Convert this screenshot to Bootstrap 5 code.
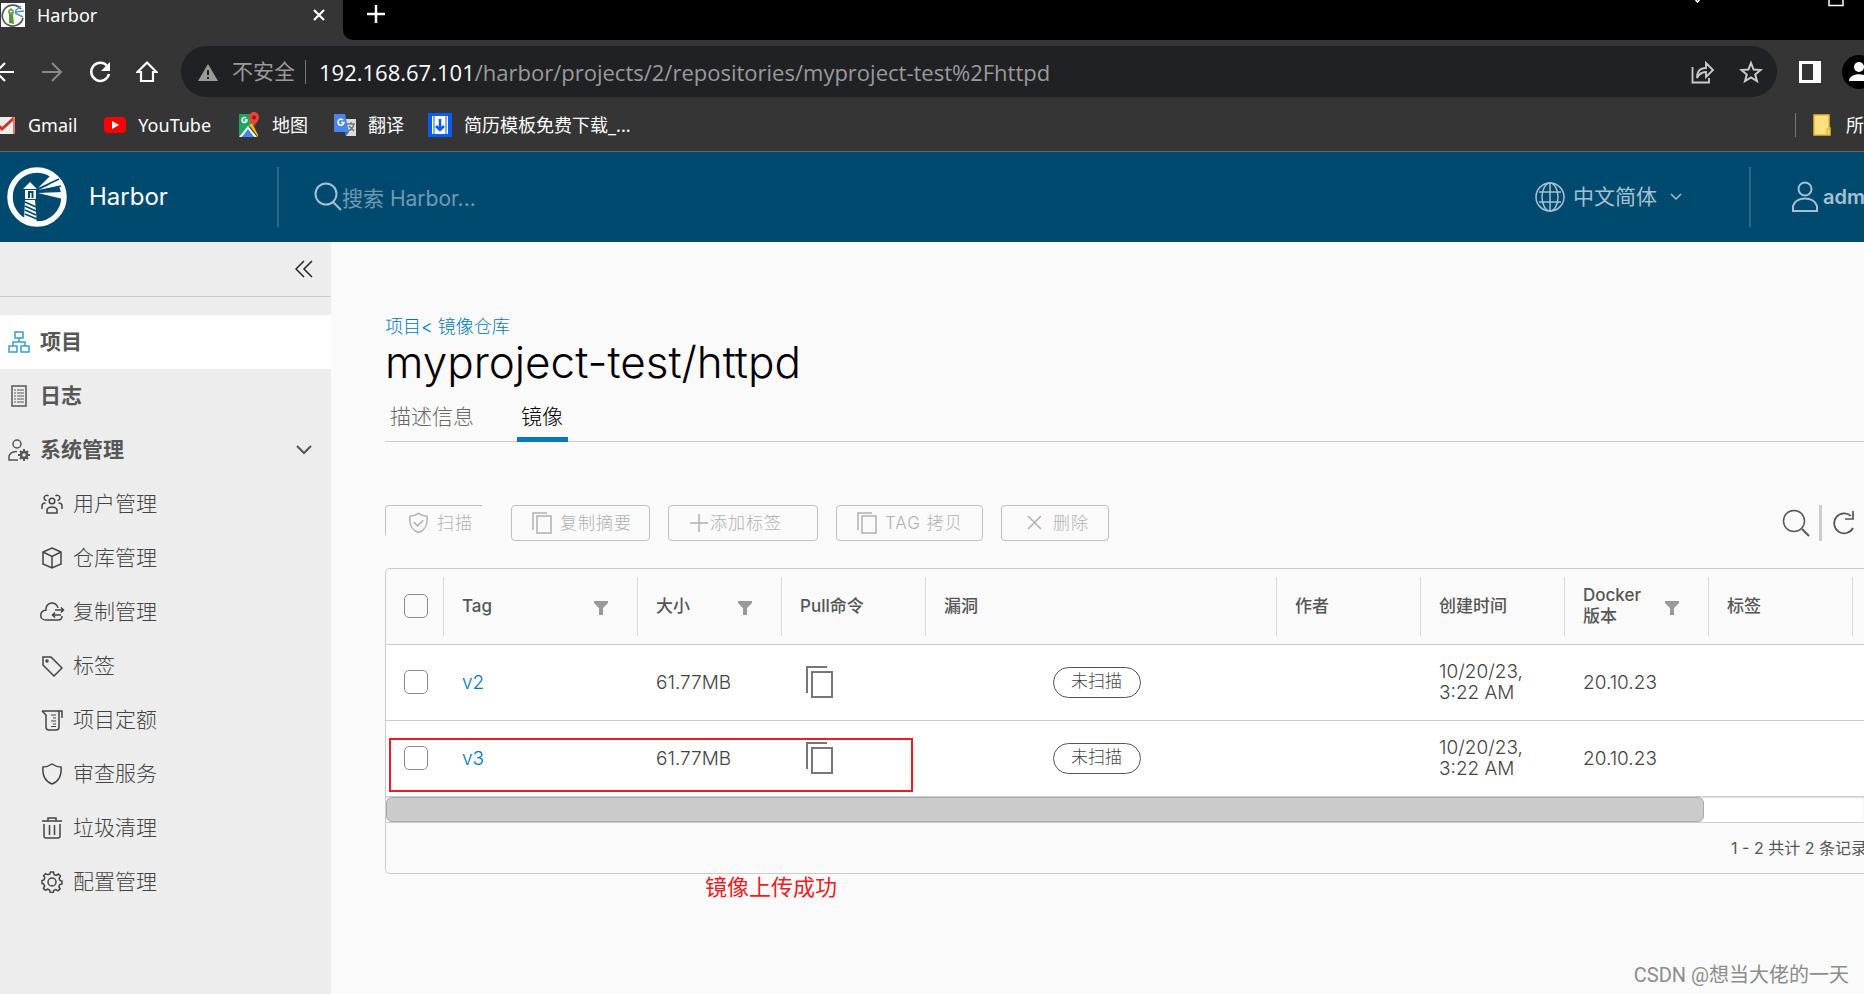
<!DOCTYPE html>
<html lang="zh-CN">
<head>
<meta charset="utf-8">
<meta name="viewport" content="width=device-width, initial-scale=1">
<title>Harbor</title>
<link href="https://cdn.jsdelivr.net/npm/bootstrap@5.3.0/dist/css/bootstrap.min.css" rel="stylesheet">
<style>
:root{--ui:"Noto Sans","Noto Sans CJK SC",sans-serif;--app:"Inter","Noto Sans CJK SC",sans-serif;--line:#ccc;--ink:#565656;--blue:#0079b8}
body{font-family:var(--app);font-size:18px;color:var(--ink);background:#fafafa;overflow-x:hidden}
svg{display:block;flex:none;fill:none;stroke:currentColor;stroke-width:1.5}
button{padding:0;border:0;background:none;color:inherit}
a{color:inherit;text-decoration:none}
/* browser chrome */
.chrome{font-family:var(--ui);background:#353535;color:#fff;border-bottom:1px solid #666}
.tabstrip{height:40px;background:#000}
.page-tab{width:343px;height:40px;background:#353535;padding:0 17px 10px 1px;font-size:18px;line-height:30px}
.tab-plus{border-bottom-left-radius:10px;background:#000;height:40px;padding:4px 0 0 23px}
.tab-fill{background:#353535}
.toolbar{height:57px;padding-top:6px}
.omnibox{height:51px;border-radius:26px;background:#202124;padding:0 14px 0 17px;font-size:21px;color:#9a9a9a}
.url{line-height:30px;font-family:"Open Sans",sans-serif;font-size:22px}
.url b{color:#fff;font-weight:400}
.navset{width:181px}
.bookmarks{height:54px;font-size:18px;line-height:24px;padding-top:2px}
.vline{width:1px;height:24px;background:#777}
.avatar{width:22px;overflow:hidden}
/* app header */
.app-head{height:90px;background:#004a70;color:#a5c1d1}
.app-head .brand{width:277px;font-size:24px;color:#fff;padding-left:7px;gap:22px}
.rule{width:2px;height:60px;background:#2f6a8a}
.search-field{background:none;border:0;outline:0;color:#7fa4b8;font-size:21px;line-height:30px;padding:4px 0 0;min-width:0}
.search-field::placeholder{color:#6f9ab0;opacity:1}
.lang{font-size:21px}
.user{width:73px;font-size:20px;font-weight:600;white-space:nowrap}
/* sidebar */
.side{width:331px;flex:none;background:#ededed;font-size:21px;line-height:30px}
.side-top{height:55px;border-bottom:1px solid var(--line);padding-right:18px;color:#222;margin-bottom:18px}
.side-link{height:54px;display:flex;align-items:center;padding:0 18px 0 8px;gap:10px;font-weight:700}
.side-link.sub{padding-left:41px;font-weight:300;color:#444}
.side-link.on{background:#fff}
.side-link.on svg{color:#3a9fd0}
/* content */
.content{padding:71px 0 0 54px;min-width:0}
.crumbs{line-height:28px;color:var(--blue);font-weight:300}
.title{font-size:44px;line-height:42px;font-weight:300;color:#000;margin:0 0 2px}
.tabs{height:57px;box-shadow:inset 0 -1px 0 var(--line);font-size:21px;line-height:30px;gap:38px}
.tabs button{padding:17px 5px 5px;color:#666;border-bottom:5px solid transparent;font-weight:300}
.tabs button.on{color:#000;border-color:var(--blue);padding-left:4px;padding-right:5px}
.actions{height:36px;margin-top:63px;padding-right:9px;gap:18px;color:#b0b0b0;font-size:17px;line-height:24px}
.act{height:36px;border:1px solid #c0c0c0;border-radius:4px;display:flex;align-items:center;letter-spacing:1px;white-space:nowrap;font-weight:300;padding-bottom:1px}
.act-scan{width:97px;height:30px;margin:0 11px 6px 0;border-width:1px 0 0 1px;border-radius:4px 0 0 0;padding:5px 0 0}
.act-icons{color:var(--ink)}
.grid-card{margin-top:27px;border:1px solid var(--line);border-right:0;border-radius:5px 0 0 5px;position:relative}
.tags{table-layout:fixed;width:100%;border-collapse:collapse;line-height:21px}
.tags th,.tags td{padding:0;vertical-align:middle}
.tags tr{height:76px;border-bottom:1px solid var(--line)}
.tags thead tr{height:75px}
.tags tbody{background:#fff}
.tags th{font-size:17px;font-weight:500}
.tags td{font-size:19px;font-weight:300;color:#444}
.th-in{height:59px;border-left:1px solid #d8d8d8;padding:0 29px 0 18px;display:flex;align-items:center;justify-content:space-between}
.tags td>div{padding-left:19px}
.tags a{color:var(--blue)}
.tick{appearance:none;width:24px;height:24px;border:1px solid #8c8c8c;border-radius:5px;background:#fff;margin:0 0 0 18px;display:block}
thead .tick{background:none}
.copy-btn{display:block;margin-left:25px;color:#777}
.copy-btn svg{stroke-width:2}
.tags .scan-cell{padding-right:8px}
.pill{display:block;width:88px;height:31px;border:1px solid var(--ink);border-radius:16px;font-size:17px;line-height:27px;text-align:center;margin:auto}
.hscroll{height:26px;background:#fff;border-bottom:1px solid var(--line);box-shadow:inset 0 1px 2px #ddd}
.hthumb{height:25px;background:#cbcbcb;border:1px solid #aaa;border-radius:6px;width:89.2%}
.foot{height:50px;margin-right:-3px;text-align:right;font-size:16px;line-height:50px;white-space:nowrap}
.redbox{position:absolute;left:3px;top:169px;width:524px;height:54px;border:2px solid #ed1c24}
.rednote{color:#ed1c24;font-size:22px;line-height:26px;padding-left:320px}
.sign{position:absolute;right:15px;bottom:4px;font-family:Roboto,"Noto Sans CJK SC",sans-serif;font-size:20px;line-height:30px;color:#8c8c8c}
</style>
</head>
<body class="min-vh-100 d-flex flex-column position-relative">
<header class="chrome">
  <div class="tabstrip d-flex">
    <div class="page-tab d-flex align-items-center">
      <svg width="24" height="24" viewBox="0 0 24 24"><path fill="#fff" stroke="none" d="M0 0h24v24H0z"/><path d="M20 6A10.500 10.500 0 1 0 22 15" stroke="#555" stroke-width="1.700"/><path fill="#4f9a35" stroke="none" d="M8 11h4l1 10-5-1z"/><path stroke="#4f9a35" d="M8 10h4V8l-2-2-2 2z"/><path d="m14 8 6-5M14 9l9-1M14 10l8 4" stroke="#5b8fbf"/></svg>
      <span class="ms-2 ps-1 me-auto">Harbor</span>
      <button aria-label="关闭"><svg width="14" height="14" viewBox="0 0 14 14" style="stroke-width:2.200"><path d="m2 2 10 10M12 2 2 12"/></svg></button>
    </div>
    <div class="tab-fill flex-grow-1"><div class="tab-plus d-flex align-items-start">
      <button aria-label="新标签页"><svg width="20" height="20" viewBox="0 0 20 20" style="stroke-width:2.5"><path d="M10 1v18M1 10h18"/></svg></button>
      <svg class="ms-auto" width="9" height="7" viewBox="0 5 9 7" style="margin-top:-4px"><path d="m1 3 3.500 4L8 3"/></svg>
      <svg style="margin:-4px 20px 0 126px" width="16" height="7" viewBox="0 0 16 7"><path d="M1-5v10.500h14V-5"/></svg>
    </div></div>
  </div>
  <div class="toolbar d-flex align-items-center">
    <div class="navset d-flex align-items-center">
      <svg width="14" height="24" viewBox="0 0 14 24" style="stroke-width:2.200"><path d="M-4 12h18M5 3l-9 9 9 9"/></svg>
      <svg style="margin-left:25px" width="26" height="24" viewBox="0 0 26 24"><path stroke="#8a8a8a" stroke-width="2" d="M3 12h19M13 3l9 9-9 9"/></svg>
      <svg style="margin-left:23px" width="24" height="24" viewBox="0 0 24 24" style="stroke-width:2.500"><path stroke-width="2.500" d="M19.500 6.500A9 9 0 1 0 21 14"/><path fill="currentColor" stroke="none" d="M22 2v9h-9z"/></svg>
      <svg class="ms-4" width="22" height="24" viewBox="0 0 22 24" style="stroke-width:2.200"><path d="M1.500 12 11 2.500l9.500 9.500H17v9H5v-9z"/></svg>
    </div>
    <div class="omnibox d-flex align-items-center flex-grow-1">
      <svg width="20" height="20" viewBox="0 0 20 20"><path fill="currentColor" stroke="none" d="m10 2 10 17H0z"/><path stroke="#202124" stroke-width="2" d="M10 8v5M10 15v2"/></svg>
      <span style="margin:0 10px 0 14px">不安全</span><span class="vline"></span>
      <span class="url me-auto" style="margin-left:13px"><b>192.168.67.101</b>/harbor/projects/2/repositories/myproject-test%2Fhttpd</span>
      <button aria-label="分享"><svg width="24" height="24" viewBox="0 0 24 24" style="stroke-width:1.800;color:#ccc"><path d="M1.500 7v15.500H18V18M6 18c0-7 3-10 9-10V3l7 7-7 7v-5c-4 0-7 2-9 6z"/></svg></button>
      <button aria-label="收藏" class="ms-4"><svg width="24" height="24" viewBox="0 0 24 24" style="stroke-width:2;color:#ccc"><path d="m12 3 2.600 6.500 7 .500-5.400 4.500L18 21l-6-3.700L6 21l1.800-6.500L2.400 10l7-.5z"/></svg></button>
    </div>
    <svg style="margin-left:22px" width="22" height="22" viewBox="0 0 22 22"><path fill="#fff" stroke="none" fill-rule="evenodd" d="M0 0h22v22H0zM3 3v16h11V3z"/></svg>
    <div class="avatar" style="margin-left:21px"><svg width="34" height="34" viewBox="0 0 34 34" style="stroke:none"><circle cx="17" cy="17" r="17" fill="#000"/><circle cx="17" cy="12" r="5" fill="#fff"/><path fill="#fff" d="M7 26c0-9 20-9 20 0z"/></svg></div>
  </div>
  <nav class="bookmarks d-flex align-items-center">
    <svg width="15" height="20" viewBox="9 0 15 20"><path fill="#eee" stroke="none" d="M0 2h24v17H0z"/><path stroke="#ddd" d="m9 16 3-4"/><path stroke="#d93025" stroke-width="3" d="M23 3 11 14 0 3"/><path stroke="#e57368" stroke-width="2" d="M23 2v17"/></svg>
    <a href="#" style="margin-left:13px">Gmail</a>
    <svg style="margin-left:27px" width="22" height="22" viewBox="0 0 22 22"><rect y="3" width="22" height="16" rx="4" fill="#f00" stroke="none"/><path fill="#fff" stroke="none" d="m8 7 7 4-7 4z"/></svg>
    <a href="#" style="margin-left:12px">YouTube</a>
    <svg style="margin-left:27px" width="22" height="26" viewBox="0 -2 22 26"><g stroke="none"><path fill="#1fa463" d="M1 0h14v10L1 23z"/><path fill="#fff" d="m1 23 9-11 9 11h-3l-6-7-6 7z"/><path fill="#4285f4" d="m4 23 6-8 6 8z"/><path fill="#fbbc04" d="m11 11 3-2 6 12v2z"/><path fill="#ea4335" d="M16-2a5 5 0 0 1 5 5c0 5-4 6-5 10-1-4-5-5-5-10a5 5 0 0 1 5-5z"/><circle cx="16" cy="3.500" r="2" fill="#8c1d18"/></g><path stroke="#fff" d="M8 4a2.500 2.500 0 1 0 1 2H6.500"/></svg>
    <a href="#" style="margin-left:12px">地图</a>
    <svg style="margin-left:25px" width="24" height="24" viewBox="0 0 24 24"><path fill="#ddd" stroke="none" d="M10 6h13v17H13z"/><path stroke="#777" d="M14 11h8M18 9v2M21 11c-1 4-3 6-6 7M16 13l5 5"/><path fill="#4a86e8" stroke="none" d="M1 1h11l4 18H1z"/><path fill="#3367d6" stroke="none" d="M12 19h4l-3 4z"/><path stroke="#fff" d="M10 7a3 3 0 1 0 1 2.500H8"/></svg>
    <a href="#" style="margin-left:11px">翻译</a>
    <svg style="margin-left:24px" width="24" height="24" viewBox="0 0 24 24"><path fill="#0a5cf0" stroke="none" d="M0 0h24v24H0z"/><path fill="#fff" stroke="none" d="M4 3h16v18H4z"/><path stroke="#0a5cf0" stroke-width="2.500" d="M12 6v11M8 13l4 4 4-4"/><path stroke="#0a5cf0" stroke-width="1" d="M6 3v18M18 3v18"/></svg>
    <a href="#" class="me-auto" style="margin-left:12px">简历模板免费下载_...</a>
    <span class="vline"></span>
    <svg style="margin-left:17px" width="18" height="22" viewBox="0 0 18 22"><path fill="#ffe082" stroke="#e5b93a" d="M1 1h15v13h1v7H1zM14 21v-6h2"/></svg>
    <a href="#" style="margin-left:15px">所</a>
  </nav>
</header>

<div class="app-head d-flex align-items-center">
  <div class="brand d-flex align-items-center">
    <svg width="60" height="60" viewBox="0 0 60 60"><circle cx="30" cy="30" r="27" style="stroke-width:5.500"/><g fill="currentColor" stroke="none"><path d="m23 15 7 7H16zM18 23h11v9H18zM18 33h10l2 25-13-3z"/><path d="m31 21 13-13 7 7z M31 23l20-9 2 5zM31 26l25-1v7z"/></g><g stroke="#004a70"><path d="M22 31v-6h3.500v6" style="stroke-width:2"/><path d="M18 35l11 5M18 39l11 5M18 43l11 5M18 47l12 5" style="stroke-width:1.700"/><path d="m31 22 21-10M32 24l22-5" style="stroke-width:1.500"/></g></svg>
    <span>Harbor</span>
  </div>
  <span class="rule"></span>
  <label class="d-flex align-items-center flex-grow-1" style="padding-left:35px">
    <svg width="28" height="30" viewBox="0 0 28 30" style="stroke-width:2"><circle cx="12" cy="12" r="10.500"/><path d="m19 20 8 8"/></svg>
    <input class="search-field flex-grow-1" type="search" placeholder="搜索 Harbor..." aria-label="搜索 Harbor...">
  </label>
  <button class="lang d-flex align-items-center">
    <svg width="30" height="30" viewBox="0 0 30 30"><circle cx="15" cy="15" r="14"/><ellipse cx="15" cy="15" rx="8" ry="14"/><path d="M15 1v28M4 10h22M4 20h22"/></svg>
    <span style="margin:0 13px 0 8px">中文简体</span>
    <svg width="12" height="8" viewBox="0 0 12 8"><path d="m1 1 5 5 5-5"/></svg>
  </button>
  <span class="rule" style="margin:0 40px 0 67px"></span>
  <button class="user d-flex align-items-center">
    <svg width="28" height="32" viewBox="0 0 28 32" style="stroke-width:2"><circle cx="14" cy="8" r="6.500"/><path d="M2 30v-5c3-10 21-10 24 0v5z"/></svg>
    <span style="margin-left:4px">adm</span>
  </button>
</div>

<div class="d-flex flex-grow-1">
  <aside class="side">
    <div class="side-top d-flex align-items-center justify-content-end"><button aria-label="收起"><svg width="18" height="18" viewBox="0 0 18 18"><path d="M9 1 1 9l8 8M17 1 9 9l8 8"/></svg></button></div>
    <nav>
      <a href="#" class="side-link on"><svg width="22" height="22" viewBox="0 0 22 22"><path d="M7 1h8v6H7zM1 15h8v6H1zM13 15h8v6h-8zM11 7v4M5 15v-4h12v4"/></svg>项目</a>
      <a href="#" class="side-link"><svg width="22" height="22" viewBox="0 0 22 22"><path d="M4 1h14v20H4z"/><path d="M6 5h2M9 5h7M6 8h2M9 8h7M6 11h2M9 11h7M6 14h2M9 14h7M6 17h2M9 17h7" stroke-width="1"/></svg>日志</a>
      <a href="#" class="side-link"><svg width="22" height="22" viewBox="0 0 22 22"><circle cx="9" cy="5" r="4"/><path d="M10 21H1v-4c1-3 4-4.500 8-4.500"/><circle cx="16" cy="16" r="3" stroke-width="2.500"/><path stroke-width="2" d="M16 10v3M16 19v3M10 16h3M19 16h3M12 12l2 2M18 18l2 2M20 12l-2 2M14 18l-2 2"/></svg><span class="me-auto">系统管理</span><svg width="18" height="12" viewBox="0 0 18 12" style="stroke-width:2"><path d="m2 2 7 7 7-7"/></svg></a>
      <a href="#" class="side-link sub"><svg width="22" height="22" viewBox="0 0 22 22"><circle cx="11" cy="8" r="2.800"/><path d="M6 20v-3c1-4 9-4 10 0v3zM7.500 3a2.600 2.600 0 1 0-2 4.500M14.500 3a2.600 2.600 0 1 1 2 4.500M1 16v-3c0-2 1.500-3 3.500-3M21 16v-3c0-2-1.500-3-3.500-3"/></svg>用户管理</a>
      <a href="#" class="side-link sub"><svg width="22" height="22" viewBox="0 0 22 22"><path d="m11 1 9 4v12l-9 4-9-4V5zM2 5l9 4.500L20 5M11 9.500V21"/></svg>仓库管理</a>
      <a href="#" class="side-link sub"><svg width="22" height="22" viewBox="0 0 22 22" overflow="visible"><path d="M17 7a6 6 0 0 0-12 2c-7 1-7 10 0 10h12c3 0 4-2 4-4"/><path d="M14 9h8M20 6.500 22.500 9 20 11.500M12 14h8M14 11.500 11.500 14l2.500 2.500"/></svg>复制管理</a>
      <a href="#" class="side-link sub"><svg width="22" height="22" viewBox="0 0 22 22"><path d="M2 2h8l11 11-8 8L2 10z"/><circle cx="6" cy="6" r="1"/></svg>标签</a>
      <a href="#" class="side-link sub"><svg width="22" height="22" viewBox="0 0 22 22"><path d="M1 2h20v7M1 2l4 4v12c0 2 1 3 3 3h7c2 0 3-1 3-3V2"/><path d="M10 6h5M12 9h3M10 12h5M12 15h3M10 17.500h5" stroke-width="1.200"/></svg>项目定额</a>
      <a href="#" class="side-link sub"><svg width="22" height="22" viewBox="0 0 22 22"><path d="M11 1c3 2 6 3 9 3 1 9-3 15-9 17C5 19 1 13 2 4c3 0 6-1 9-3z"/></svg>审查服务</a>
      <a href="#" class="side-link sub"><svg width="22" height="22" viewBox="0 0 22 22"><path d="M1 4h20M7 4V1h8v3M3 7v12c0 1 1 2 2 2h12c1 0 2-1 2-2V7M8.500 8v10M13.500 8v10"/></svg>垃圾清理</a>
      <a href="#" class="side-link sub"><svg width="22" height="22" viewBox="0 0 22 22"><circle cx="11" cy="11" r="4"/><path d="M9.500 1h3l.6 2.600 2 .8 2.300-1.400 2.100 2.100L18.100 7.400l.8 2 2.100.6v3l-2.300.6-.8 2 1.200 2.200-2.100 2.100-2.200-1.300-2 .8-.6 2.100h-3L8.600 19l-2-.8-2.200 1.200-2-2 1.200-2.300-.8-2L1 12.500v-3l2-.6.8-2-1.200-2.300 2-2 2.300 1.200 2-.8z"/></svg>配置管理</a>
    </nav>
  </aside>

  <main class="content flex-grow-1">
    <div class="crumbs"><a href="#">项目</a>&lt; <a href="#">镜像仓库</a></div>
    <h1 class="title">myproject-test/httpd</h1>
    <div class="tabs d-flex" role="tablist"><button role="tab">描述信息</button><button role="tab" class="on">镜像</button></div>
    <div class="actions d-flex align-items-center">
      <button class="act act-scan" disabled><svg style="margin:0 8px 0 22px" width="21" height="22" viewBox="0 0 22 22"><path d="M11 1c3 2 6 3 9 3 1 9-3 15-9 17C5 19 1 13 2 4c3 0 6-1 9-3zM6 10l4 4 6-6"/></svg>扫描</button>
      <button class="act" style="width:139px" disabled><svg style="margin:0 8px 0 20px" width="20" height="22" viewBox="0 0 20 22"><path d="M5 4h14v17H5zM1 18V1h14"/></svg>复制摘要</button>
      <button class="act" style="width:150px" disabled><svg style="margin:0 2px 0 21px" width="18" height="18" viewBox="0 0 18 18"><path d="M9 0v18M0 9h18"/></svg>添加标签</button>
      <button class="act" style="width:147px" disabled><svg style="margin:0 8px 0 20px" width="20" height="22" viewBox="0 0 20 22"><path d="M5 4h14v17H5zM1 18V1h14"/></svg>TAG 拷贝</button>
      <button class="act" style="width:108px" disabled><svg style="margin:0 11px 0 25px" width="15" height="15" viewBox="0 0 15 15"><path d="m1 1 13 13M14 1 1 14"/></svg>删除</button>
      <div class="act-icons d-flex align-items-center ms-auto">
        <button aria-label="搜索"><svg width="28" height="29" viewBox="0 0 28 29"><circle cx="12" cy="12" r="10.500"/><path d="m20 20 7 7" stroke-width="2"/></svg></button>
        <span style="width:3px;height:36px;background:#ccc;margin:0 9px"></span>
        <button aria-label="刷新"><svg width="24" height="26" viewBox="0 0 24 26"><path d="M20 6a10 10 0 1 0 2 12M22 1v8h-8" style="stroke-width:1.700"/></svg></button>
      </div>
    </div>

    <section class="grid-card">
      <table class="tags">
        <colgroup><col style="width:57px"><col style="width:194px"><col style="width:144px"><col style="width:144px"><col><col style="width:144px"><col style="width:144px"><col style="width:144px"><col style="width:144px"><col style="width:12px"></colgroup>
        <thead><tr>
          <th><input type="checkbox" class="tick" aria-label="全选"></th>
          <th><div class="th-in">Tag<svg width="14" height="14" viewBox="0 0 14 14" style="margin-top:4px"><path fill="#999" stroke="none" d="M0 0h14v2L9 7v7H5V7L0 2z"/></svg></div></th>
          <th><div class="th-in">大小<svg width="14" height="14" viewBox="0 0 14 14" style="margin-top:4px"><path fill="#999" stroke="none" d="M0 0h14v2L9 7v7H5V7L0 2z"/></svg></div></th>
          <th><div class="th-in">Pull命令</div></th>
          <th><div class="th-in">漏洞</div></th>
          <th><div class="th-in">作者</div></th>
          <th><div class="th-in">创建时间</div></th>
          <th><div class="th-in"><span>Docker<br>版本</span><svg width="14" height="14" viewBox="0 0 14 14" style="margin-top:4px"><path fill="#999" stroke="none" d="M0 0h14v2L9 7v7H5V7L0 2z"/></svg></div></th>
          <th><div class="th-in">标签</div></th>
          <th><div class="th-in p-0"></div></th>
        </tr></thead>
        <tbody>
          <tr><td><input type="checkbox" class="tick" aria-label="v2"></td><td><div><a href="#">v2</a></div></td><td><div>61.77MB</div></td>
            <td><button aria-label="复制 v2" class="copy-btn"><svg width="27" height="32" viewBox="0 0 27 32"><path d="M6 6h20v25H6zM1 27V1h20"/></svg></button></td>
            <td class="scan-cell"><span class="pill">未扫描</span></td><td></td><td><div>10/20/23,<br>3:22 AM</div></td><td><div>20.10.23</div></td><td></td><td></td></tr>
          <tr><td><input type="checkbox" class="tick" aria-label="v3"></td><td><div><a href="#">v3</a></div></td><td><div>61.77MB</div></td>
            <td><button aria-label="复制 v3" class="copy-btn"><svg width="27" height="32" viewBox="0 0 27 32"><path d="M6 6h20v25H6zM1 27V1h20"/></svg></button></td>
            <td class="scan-cell"><span class="pill">未扫描</span></td><td></td><td><div>10/20/23,<br>3:22 AM</div></td><td><div>20.10.23</div></td><td></td><td></td></tr>
        </tbody>
      </table>
      <div class="hscroll"><div class="hthumb"></div></div>
      <div class="foot">1 - 2 共计 2 条记录</div>
      <div class="redbox"></div>
    </section>
    <div class="rednote">镜像上传成功</div>
  </main>
</div>
<div class="sign">CSDN @想当大佬的一天</div>
<script src="https://cdn.jsdelivr.net/npm/bootstrap@5.3.0/dist/js/bootstrap.bundle.min.js"></script>
</body>
</html>
